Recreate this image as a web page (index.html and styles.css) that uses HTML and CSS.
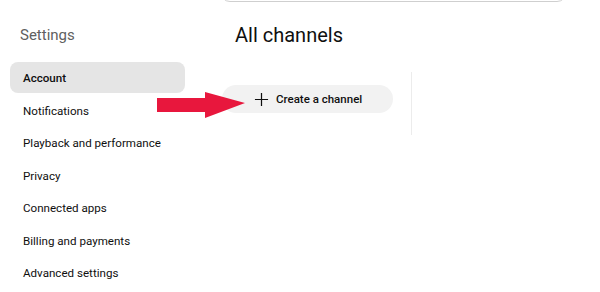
FILE: index.html
```html
<!DOCTYPE html>
<html lang="en">
<head>
    <meta charset="UTF-8">
    <title>Settings - All channels</title>
    <link rel="stylesheet" href="styles.css">
</head>
<body>
    <div class="search-edge"></div>
    <div class="page">
        <aside class="sidebar">
            <h2 class="sidebar-title">Settings</h2>
            <nav class="menu">
                <a class="menu-item active">Account</a>
                <a class="menu-item">Notifications</a>
                <a class="menu-item">Playback and performance</a>
                <a class="menu-item">Privacy</a>
                <a class="menu-item">Connected apps</a>
                <a class="menu-item">Billing and payments</a>
                <a class="menu-item">Advanced settings</a>
            </nav>
        </aside>
        <main class="content">
            <h1 class="content-title">All channels</h1>
            <div class="channels">
                <div class="channel-cell">
                    <button class="create-btn">
                        <svg width="15" height="15" viewBox="0 0 16 16"><path d="M8 1v14M1 8h14" stroke="#0f0f0f" stroke-width="1.3" fill="none"/></svg>
                        Create a channel
                    </button>
                </div>
            </div>
        </main>
    </div>
    <svg class="arrow" width="92" height="30" viewBox="0 0 92 30">
        <path d="M0 6H48V0L88 11L48 26V20H0Z" fill="#e8173d"/>
    </svg>
</body>
</html>
```

FILE: styles.css
```css
body {
    margin: 0;
    background: #fff;
    font-family: Roboto, "Liberation Sans", sans-serif;
    color: #0f0f0f;
    position: relative;
    overflow: hidden;
}
.search-edge {
    position: absolute;
    top: -20px;
    left: 220px;
    width: 345px;
    height: 20px;
    border: 1px solid #cfcfcf;
    border-radius: 0 0 10px 10px;
}
.page {
    display: flex;
}
.sidebar {
    width: 222px;
    padding-left: 10px;
    box-sizing: border-box;
}
.sidebar-title {
    margin: 26px 0 18px 10px;
    font-size: 15px;
    font-weight: 400;
    color: #606060;
    line-height: 18px;
}
.menu {
    display: flex;
    flex-direction: column;
}
.menu-item {
    width: 175px;
    height: 32.5px;
    box-sizing: border-box;
    padding-left: 13px;
    display: flex;
    align-items: center;
    font-size: 11.6px;
    border-radius: 8px;
}
.menu-item.active {
    background: #e5e5e5;
    font-weight: 500;
    height: 31px;
    margin-bottom: 1.5px;
}
.content {
    flex: 1;
}
.content-title {
    margin: 24px 0 0 13px;
    font-size: 20px;
    font-weight: 400;
    line-height: 22px;
}
.channels {
    display: flex;
    margin-top: 26px;
}
.channel-cell {
    width: 189px;
    height: 63px;
    border-right: 1px solid #ececec;
}
.create-btn {
    width: 171px;
    height: 28px;
    margin-top: 13px;
    border: none;
    border-radius: 14px;
    background: #f2f2f2;
    font-family: inherit;
    font-size: 11.5px;
    font-weight: 500;
    color: #0f0f0f;
    display: flex;
    align-items: center;
    gap: 7px;
    padding: 0 0 0 32px;
}
.arrow {
    position: absolute;
    left: 157px;
    top: 92px;
}
```
